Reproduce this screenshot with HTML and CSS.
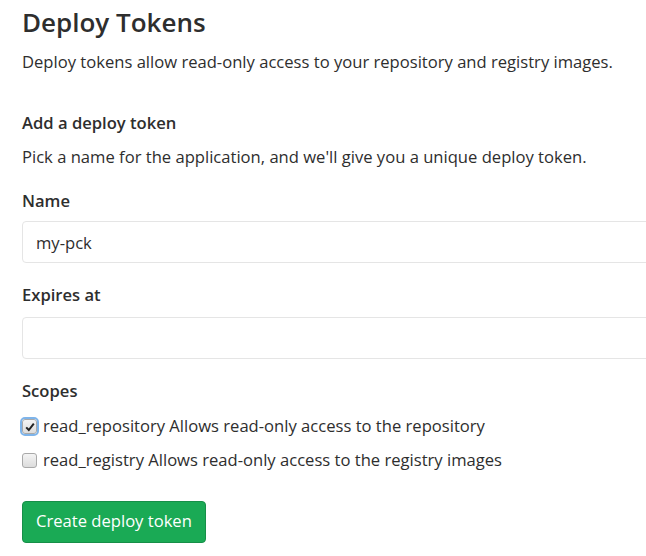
FILE: index.html
```html
<!DOCTYPE html>
<html lang="en">
<head>
<meta charset="UTF-8" />
<title>Deploy Tokens</title>
<link rel="stylesheet" href="styles.css">
</head>
<body>

<section class="tokens">
  <h1>Deploy Tokens</h1>
  <p class="lead">Deploy tokens allow read-only access to your repository and registry images.</p>

  <h2>Add a deploy token</h2>
  <p class="hint">Pick a name for the application, and we'll give you a unique deploy token.</p>

  <form class="token-form">
    <div class="field">
      <label for="name">Name</label>
      <input type="text" id="name" value="my-pck">
    </div>
    <div class="field">
      <label for="expires">Expires at</label>
      <input type="text" id="expires">
    </div>

    <div class="field scopes">
      <label>Scopes</label>
      <div class="check-row">
        <span class="check checked focus">
          <svg viewBox="0 0 12 12" width="12" height="12"><path d="M2.2 6.4 L4.8 9 L9.8 2.6" fill="none" stroke="#222" stroke-width="2"/></svg>
        </span>
        <span>read_repository Allows read-only access to the repository</span>
      </div>
      <div class="check-row">
        <span class="check"></span>
        <span>read_registry Allows read-only access to the registry images</span>
      </div>
    </div>

    <button type="submit">Create deploy token</button>
  </form>
</section>

</body>
</html>
```

FILE: styles.css
```css
:root{
  --text:#2e2e2e;--border:#e5e5e5;--green:#1aaa55;--green-dark:#168f48
}
*{box-sizing:border-box;margin:0;padding:0}
html,body{overflow:hidden}
body{
  font-family:"Open Sans","Noto Sans",sans-serif;
  font-size:16.6px;color:var(--text);background:#fff;
  line-height:24.6px
}
.tokens{padding:6px 0 0 22px;width:700px}
h1{font-size:26px;font-weight:600;line-height:32px;margin-bottom:12px}
.lead{margin-bottom:36px}
h2{font-size:16.6px;font-weight:600;margin-bottom:10px}
.hint{margin-bottom:19px}
.field{margin-bottom:20px}
.field label{display:block;font-weight:600;margin-bottom:8px}
.field input{
  width:100%;height:42px;
  border:1px solid var(--border);border-radius:4px;
  padding:0 13px;font:inherit;color:var(--text);background:#fff
}
.field:nth-child(2) label{margin-bottom:9px}
.scopes{margin-bottom:0}
.scopes label{margin-bottom:6px}
.check-row{display:flex;align-items:center;gap:6px;height:34px}
.check{
  width:15px;height:15px;border:1px solid #a9a9a9;border-radius:3px;
  background:linear-gradient(#f4f4f4,#dcdcdc);
  display:flex;align-items:center;justify-content:center
}
.check.focus{outline:2px solid #7eb4ea;outline-offset:0}
button{
  margin-top:23px;height:42px;padding:0 13px;
  background:var(--green);border:1px solid var(--green-dark);border-radius:4px;
  color:#fff;font:inherit;cursor:pointer
}
button:hover{background:var(--green-dark)}
```
